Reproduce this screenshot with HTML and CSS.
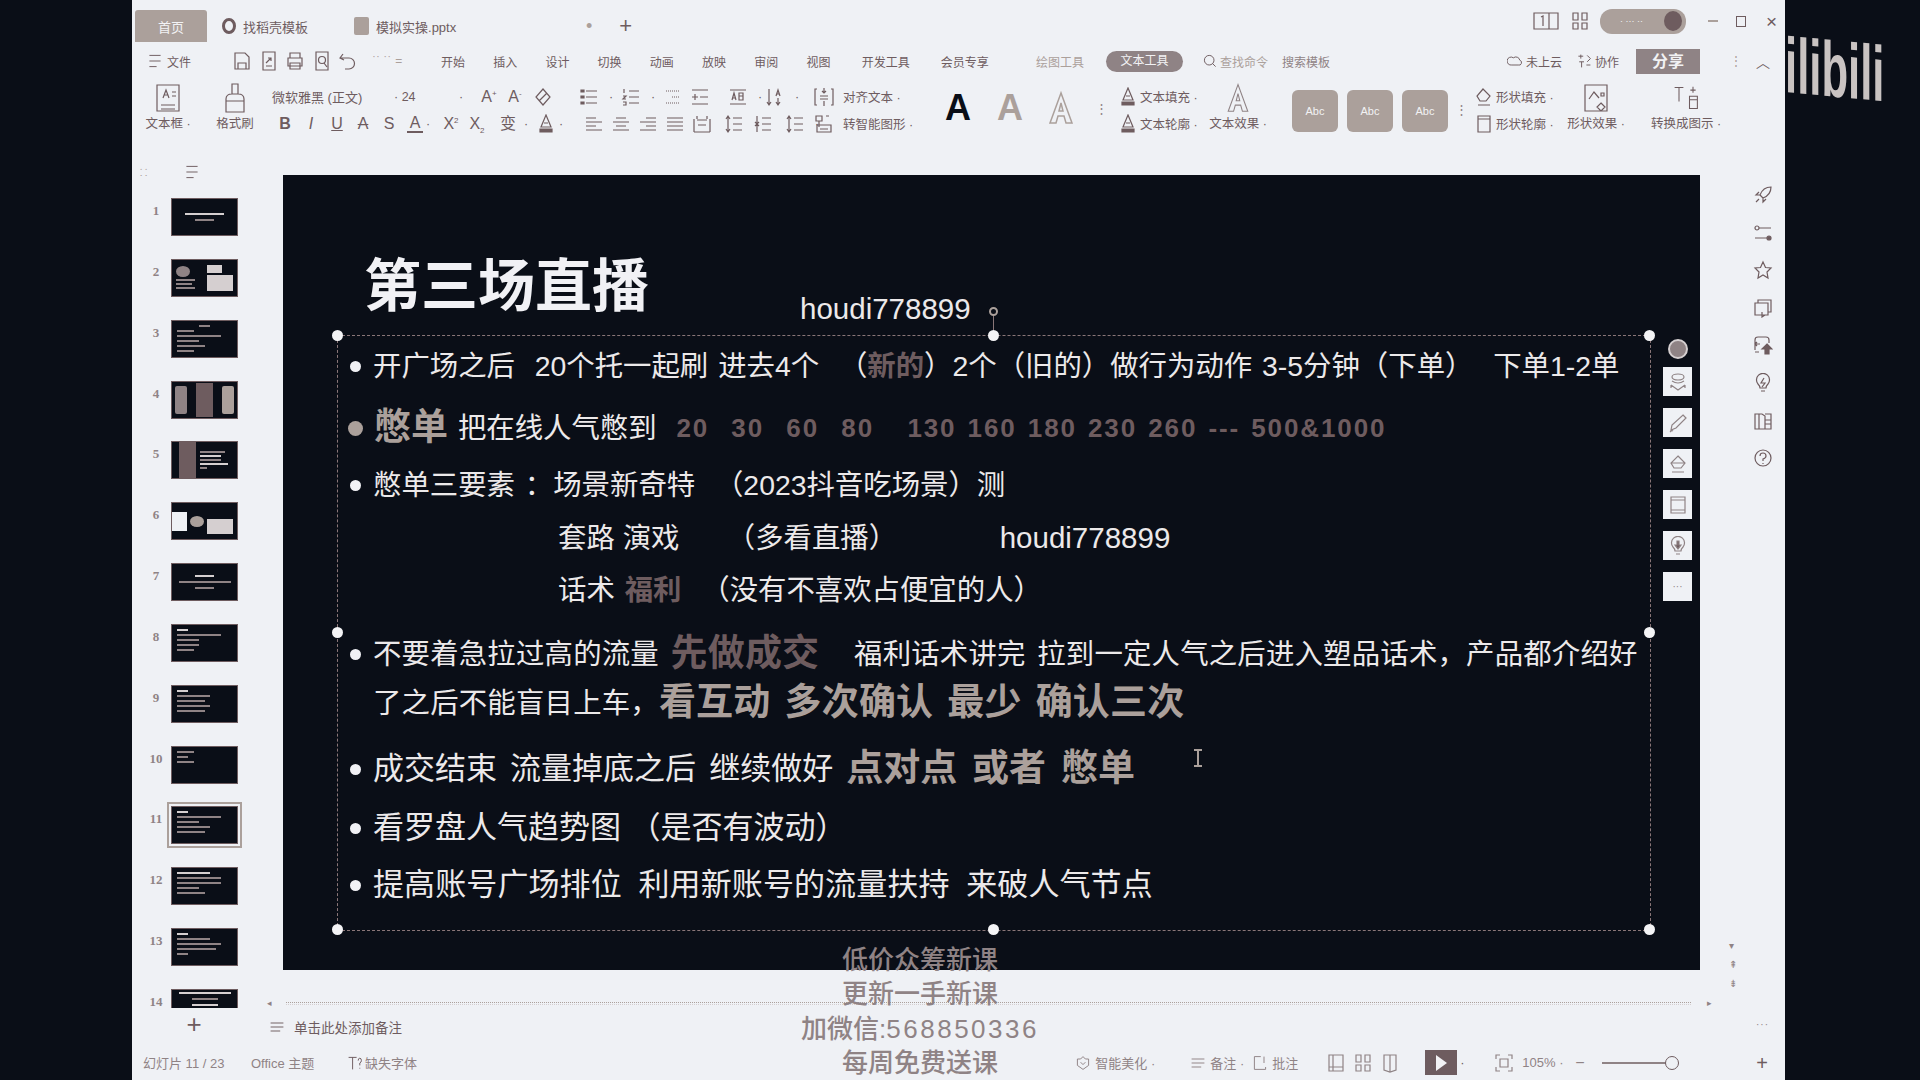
FILE: index.html
```html
<!DOCTYPE html>
<html lang="zh-CN">
<head>
    <meta charset="UTF-8">
    <title>模拟实操.pptx</title>
    <link rel="stylesheet" href="styles.css">
</head>
<body>

<svg class="defs" width="0" height="0">
    <symbol id="i-save" viewBox="0 0 20 20"><path d="M3 2h10l4 4v12H3zM6 18v-6h8v6"/></symbol>
    <symbol id="i-export" viewBox="0 0 20 20"><path d="M4 1h12v18H4zM7 12l5-5M9 7h3v3M7 15h6"/></symbol>
    <symbol id="i-print" viewBox="0 0 20 20"><path d="M5 7V2h10v5M3 7h14v8H3zM5 12h10v6H5z"/></symbol>
    <symbol id="i-preview" viewBox="0 0 20 20"><path d="M4 1h12v18H4z"/><circle cx="10" cy="9" r="3.5"/><path d="M12 12l3 4"/></symbol>
    <symbol id="i-undo" viewBox="0 0 20 20"><path d="M5 3L2 7l4 2M2 7h9a5 5 0 0 1 0 11H7"/></symbol>
    <symbol id="i-textbox" viewBox="0 0 28 32"><path d="M3 3h22v26H3zM7 23h14M7 27h14M9 16l3-8 3 8M10 13h4M18 10h4M18 14h4"/></symbol>
    <symbol id="i-brush" viewBox="0 0 28 32"><path d="M11 2h6v10h-6zM5 17q0-5 6-5h6q6 0 6 5v13H5zM5 19h18"/></symbol>
    <symbol id="i-eraser" viewBox="0 0 20 20"><path d="M10 2l7 8-7 8-7-8zM6 14l8-8"/></symbol>
    <symbol id="i-bullets" viewBox="0 0 20 20"><path d="M7 4h11M7 10h11M7 16h11"/><path class="solid" d="M2 3h3v2H2zM2 9h3v2H2zM2 15h3v2H2z"/></symbol>
    <symbol id="i-numbers" viewBox="0 0 20 20"><path d="M8 4h10M8 10h10M8 16h10M3 2v4M2 9h3l-3 3h3M2 15h3v3H2"/></symbol>
    <symbol id="i-outdent" viewBox="0 0 20 20"><path d="M3 4h14M9 10h8M3 16h14" stroke-dasharray="1 1"/></symbol>
    <symbol id="i-indent" viewBox="0 0 20 20"><path d="M2 3h16M10 10h8M2 17h16M2 10h6M5 7v6"/></symbol>
    <symbol id="i-ab" viewBox="0 0 20 20"><path d="M2 3h16M2 17h16M4 13l2-7 2 7M5 11h2M11 6h4v3h-4zM11 9h4v4h-4z"/></symbol>
    <symbol id="i-sort" viewBox="0 0 20 20"><path d="M4 2v16M2 15l2 3 2-3M11 9l2-6 2 6M12 7h2M13 11v7M11 15l2 3 2-3"/></symbol>
    <symbol id="i-valign" viewBox="0 0 20 20"><path d="M3 2H1v16h2M17 2h2v16h-2M10 1v5M8 4l2 2 2-2M6 9h8M6 12h8M10 14v5"/></symbol>
    <symbol id="i-smart" viewBox="0 0 20 20"><path d="M2 2h6v5H2zM12 2h3M5 7v6M3 11h14v7H3zM6 15h8"/></symbol>
    <symbol id="i-left" viewBox="0 0 20 20"><path d="M2 4h10M2 8h16M2 12h10M2 16h16"/></symbol>
    <symbol id="i-center" viewBox="0 0 20 20"><path d="M5 4h10M2 8h16M5 12h10M2 16h16"/></symbol>
    <symbol id="i-right" viewBox="0 0 20 20"><path d="M8 4h10M2 8h16M8 12h10M2 16h16"/></symbol>
    <symbol id="i-justify" viewBox="0 0 20 20"><path d="M2 4h16M2 8h16M2 12h16M2 16h16"/></symbol>
    <symbol id="i-dist" viewBox="0 0 20 20"><path d="M2 18h16M2 5v13M18 5v13M5 6h10M5 2v3M15 2v3M6 11h8"/></symbol>
    <symbol id="i-line1" viewBox="0 0 20 20"><path d="M4 2v16M2 5l2-3 2 3M2 15l2 3 2-3M9 4h9M9 10h9M9 16h9"/></symbol>
    <symbol id="i-line2" viewBox="0 0 20 20"><path d="M4 2v16M2 8l2 2 2-2M2 12l2-2 2 2M9 4h9M9 10h9M9 16h9"/></symbol>
    <symbol id="i-fill" viewBox="0 0 20 20"><path d="M10 1l5 12H5zM8 9h4"/><path class="solid" d="M4 15h12v3H4z"/></symbol>
    <symbol id="i-bigA" viewBox="0 0 30 36"><path d="M15 3L4 33h6l2-7h6l2 7h6zM13 21l2-8 2 8z"/></symbol>
    <symbol id="i-shapefill" viewBox="0 0 20 20"><path d="M9 2l7 7-4 5H6L3 9zM4 18h12"/></symbol>
    <symbol id="i-shapeline" viewBox="0 0 20 20"><path d="M4 2h12v16H4zM4 5h12"/></symbol>
    <symbol id="i-shapefx" viewBox="0 0 28 32"><path d="M3 3h22v26H3zM7 17l5-7 5 6M19 11h3v3h-3zM19 21l4 4-4 4-4-4z"/></symbol>
    <symbol id="i-convert" viewBox="0 0 32 32"><path d="M3 4h10M8 4v16M20 14h9v14h-9zM20 18h9M24 3v7M21 7h6"/></symbol>
    <symbol id="i-cloud" viewBox="0 0 20 20"><path d="M14 15H6a5 5 0 1 1 2-9 5 5 0 0 1 8 3 3 3 0 0 1-2 6z"/></symbol>
    <symbol id="i-share" viewBox="0 0 20 20"><path d="M6 2v5M3 4h6M4 11h6M7 11v7M14 3l4 4M18 7l-4 4M13 15h5"/></symbol>
    <symbol id="i-search" viewBox="0 0 20 20"><circle cx="9" cy="9" r="6"/><path d="M13 13l4 4"/></symbol>
    <symbol id="i-layout" viewBox="0 0 28 20"><path d="M2 2h24v16H2zM17 2v16M9 6l2-1v10"/></symbol>
    <symbol id="i-grid" viewBox="0 0 20 20"><path d="M3 2h5v7H3zM12 2h5v7h-5zM3 12h5v6H3zM12 12h5v6h-5z"/></symbol>
    <symbol id="i-rocket" viewBox="0 0 20 20"><path d="M18 2q-8 0-11 8l3 3q8-3 8-11zM7 10H3l3-3M10 13v4l3-3M3 17l3-3"/></symbol>
    <symbol id="i-sliders" viewBox="0 0 20 20"><path d="M6 5h12M2 15h12" /><circle cx="4" cy="5" r="2"/><circle class="solid" cx="16" cy="15" r="2"/></symbol>
    <symbol id="i-star" viewBox="0 0 20 20"><path d="M10 2l2.500 5.500 5.500.5-4 4 1 6-5-3-5 3 1-6-4-4 5.500-.5z"/></symbol>
    <symbol id="i-slides" viewBox="0 0 20 20"><path d="M5 5V2h13v12h-3M2 5h13v12H2zM9 14v5l3-2"/></symbol>
    <symbol id="i-cloudup" viewBox="0 0 20 20"><path d="M2 15V5q0-3 3-3h8q3 0 3 3v3M6 17H2M2 9h5M4 7L2 9l2 2"/><path class="solid" d="M14 9l5 5h-3v5h-4v-5H9z"/></symbol>
    <symbol id="i-bulb" viewBox="0 0 20 20"><path d="M7 15q0-2-2-4a6.500 6.500 0 1 1 10 0q-2 2-2 4zM8 18h4M11 5l-3 5h4l-3 4"/></symbol>
    <symbol id="i-book" viewBox="0 0 20 20"><path d="M2 3h7l3 2v13H2zM12 3h6v6M12 18h6v-5M12 9h6v4h-6zM6 3v15"/></symbol>
    <symbol id="i-help" viewBox="0 0 20 20"><circle cx="10" cy="10" r="8"/><path d="M7 8q0-3 3-3t3 3q0 2-3 3v2M10 15v1"/></symbol>
    <symbol id="i-layers" viewBox="0 0 20 20"><ellipse cx="10" cy="5" rx="6" ry="3"/><path d="M4 9q6 4 12 0M3 13l7 5 7-5M3 13v3M17 13v3"/></symbol>
    <symbol id="i-pen" viewBox="0 0 20 20"><path d="M15 2l3 3L8 15l-5 2 1-5zM2 19q2-2 3-1"/></symbol>
    <symbol id="i-fillshape" viewBox="0 0 20 20"><path d="M10 2l7 7-4 5H6L3 9zM3 9h14M4 18h12"/></symbol>
    <symbol id="i-frame" viewBox="0 0 20 20"><path d="M3 2h14v16H3zM3 5h14M3 15h14"/></symbol>
    <symbol id="i-bulbfill" viewBox="0 0 20 20"><path d="M7 15q0-2-2-4a6.500 6.500 0 1 1 10 0q-2 2-2 4zM8 18h4"/><path class="solid" d="M9 5h2v4h2l-3 4-3-4h2z"/></symbol>
    <symbol id="i-notes" viewBox="0 0 20 20"><path d="M2 5h16M2 10h16M2 15h12"/></symbol>
    <symbol id="i-font" viewBox="0 0 20 20"><path d="M2 3h10M7 3v15M14 7q0-3 2-3t2 3q0 2-2 3v3M16 16v1"/></symbol>
    <symbol id="i-shield" viewBox="0 0 20 20"><path d="M10 2l3 3h4v8l-7 5-7-5V5h4zM7 9l3 3 3-3"/></symbol>
    <symbol id="i-comment" viewBox="0 0 20 20"><path d="M3 2h8M3 2v16h14v-3M15 2v8"/></symbol>
    <symbol id="i-sorter" viewBox="0 0 20 20"><path d="M3 2h14v16H3zM7 2v16M3 14h14"/></symbol>
    <symbol id="i-reading" viewBox="0 0 20 20"><path d="M4 2h12v15l-6 2-6-2zM10 2v17"/></symbol>
    <symbol id="i-fit" viewBox="0 0 20 20"><path d="M2 6V2h4M14 2h4v4M18 14v4h-4M6 18H2v-4M6 6h8v8H6z"/></symbol>
    <symbol id="i-list" viewBox="0 0 20 20"><path d="M3 3h14M3 10h14M3 17h9"/></symbol>
</svg>

<div class="gutter"></div>

<div class="window">
    <header class="tabbar">
        <div class="tab tab-home">首页</div>
        <div class="tab tab-tpl"><span class="tpl-dot"></span>找稻壳模板</div>
        <div class="tab tab-file"><span class="file-dot"></span>模拟实操.pptx</div>
        <span class="tab-mark">•</span>
        <span class="tab-add">+</span>
        <div class="win-actions">
            <svg class="ic ic-wide"><use href="#i-layout"/></svg>
            <svg class="ic"><use href="#i-grid"/></svg>
            <div class="user-pill"><span class="user-name">· ··· ··</span><span class="avatar"></span></div>
            <span class="win-btn win-min"></span>
            <span class="win-btn win-max"></span>
            <span class="win-btn win-close">×</span>
        </div>
    </header>

    <nav class="menubar">
        <span class="menu-file"><svg class="ic ic-s"><use href="#i-list"/></svg>文件</span>
        <div class="quick">
            <svg class="ic"><use href="#i-save"/></svg>
            <svg class="ic"><use href="#i-export"/></svg>
            <svg class="ic"><use href="#i-print"/></svg>
            <svg class="ic"><use href="#i-preview"/></svg>
            <svg class="ic"><use href="#i-undo"/></svg>
            <span class="quick-more">˙˙ ˙˙ =</span>
        </div>
        <div class="menu-items">
            <span>开始</span><span>插入</span><span>设计</span><span>切换</span><span>动画</span><span>放映</span><span>审阅</span><span>视图</span><span>开发工具</span><span>会员专享</span>
        </div>
        <span class="menu-draw">绘图工具</span>
        <span class="menu-active">文本工具</span>
        <span class="menu-find"><svg class="ic ic-s"><use href="#i-search"/></svg>查找命令</span>
        <span class="menu-tpl">搜索模板</span>
        <div class="menu-right">
            <span class="menu-act"><svg class="ic ic-s"><use href="#i-cloud"/></svg>未上云</span>
            <span class="menu-act"><svg class="ic ic-s"><use href="#i-share"/></svg>协作</span>
            <span class="share-box">分享</span>
            <span class="menu-dots">⋮</span>
            <span class="menu-up">︿</span>
        </div>
    </nav>

    <section class="ribbon">
        <div class="big-tool tool-textbox"><svg class="ic-big"><use href="#i-textbox"/></svg><span>文本框 ·</span></div>
        <div class="big-tool tool-brush"><svg class="ic-big"><use href="#i-brush"/></svg><span>格式刷</span></div>

        <div class="rib-group font-group">
            <div class="rib-row">
                <span class="font-name">微软雅黑 (正文)</span>
                <span class="font-size">· 24</span>
                <span class="font-caret">·</span>
                <span class="glyph">A<sup>+</sup></span>
                <span class="glyph">A<sup>-</sup></span>
                <svg class="ic sp-5"><use href="#i-eraser"/></svg>
            </div>
            <div class="rib-row">
                <b class="glyph">B</b>
                <i class="glyph">I</i>
                <u class="glyph">U</u>
                <s class="glyph">A</s>
                <span class="glyph">S</span>
                <span class="glyph glyph-under">A</span>
                <span class="caret">·</span>
                <span class="glyph sp-5">X<sup>2</sup></span>
                <span class="glyph">X<sub>2</sub></span>
                <span class="glyph sp-5">变</span>
                <span class="caret">·</span>
                <svg class="ic sp-5"><use href="#i-fill"/></svg>
                <span class="caret">·</span>
            </div>
        </div>

        <div class="rib-group para-group">
            <div class="rib-row">
                <svg class="ic"><use href="#i-bullets"/></svg><span class="caret">·</span>
                <svg class="ic sp-5"><use href="#i-numbers"/></svg><span class="caret">·</span>
                <svg class="ic sp-5"><use href="#i-outdent"/></svg>
                <svg class="ic"><use href="#i-indent"/></svg>
                <svg class="ic sp-11"><use href="#i-ab"/></svg><span class="caret">·</span>
                <svg class="ic"><use href="#i-sort"/></svg><span class="caret">·</span>
                <span class="rib-label para-label"><svg class="ic"><use href="#i-valign"/></svg>对齐文本 ·</span>
            </div>
            <div class="rib-row align-row">
                <svg class="ic"><use href="#i-left"/></svg>
                <svg class="ic"><use href="#i-center"/></svg>
                <svg class="ic"><use href="#i-right"/></svg>
                <svg class="ic"><use href="#i-justify"/></svg>
                <svg class="ic"><use href="#i-dist"/></svg>
                <svg class="ic sp-5"><use href="#i-line1"/></svg>
                <svg class="ic sp-2"><use href="#i-line2"/></svg>
                <svg class="ic sp-5"><use href="#i-line1"/></svg><span class="caret">·</span>
                <span class="rib-label smart-label"><svg class="ic"><use href="#i-smart"/></svg>转智能图形 ·</span>
            </div>
        </div>

        <div class="styles-a">
            <span class="style-a a-black">A</span>
            <span class="style-a a-gray">A</span>
            <svg class="a-outline"><use href="#i-bigA"/></svg>
            <span class="more-mark">⋮</span>
        </div>

        <div class="rib-group fill-group">
            <span class="rib-label"><svg class="ic"><use href="#i-fill"/></svg>文本填充 ·</span>
            <span class="rib-label"><svg class="ic"><use href="#i-fill"/></svg>文本轮廓 ·</span>
        </div>
        <div class="big-tool tool-effect"><svg class="ic-big"><use href="#i-bigA"/></svg><span>文本效果 ·</span></div>

        <div class="abc-list">
            <span class="abc">Abc</span><span class="abc">Abc</span><span class="abc">Abc</span>
            <span class="more-mark">⋮</span>
        </div>

        <div class="rib-group shape-group">
            <span class="rib-label"><svg class="ic"><use href="#i-shapefill"/></svg>形状填充 ·</span>
            <span class="rib-label"><svg class="ic"><use href="#i-shapeline"/></svg>形状轮廓 ·</span>
        </div>
        <div class="big-tool tool-shapefx"><svg class="ic-big"><use href="#i-shapefx"/></svg><span>形状效果 ·</span></div>
        <div class="big-tool tool-convert"><svg class="ic-big"><use href="#i-convert"/></svg><span>转换成图示 ·</span></div>
    </section>

    <main class="workspace">
        <aside class="sidebar">
            <div class="side-head">
                <span class="side-dots">⁚ ⁚</span>
                <svg class="ic ic-s"><use href="#i-list"/></svg>
            </div>
            <div class="thumb-list">
                <div class="thumb-item"><span class="num">1</span><div class="thumb t-center"><i class="bar w60 light"></i><i class="bar w30 mid"></i></div></div>
                <div class="thumb-item"><span class="num">2</span><div class="thumb t-two"><div class="t-col"><i class="blob"></i><i class="bar w70 mid"></i><i class="bar w60 mid"></i><i class="bar w70 mid"></i></div><div class="t-col"><i class="block short"></i><i class="block tall"></i></div></div></div>
                <div class="thumb-item"><span class="num">3</span><div class="thumb t-lines"><i class="bar w20 mid mid-x"></i><i class="bar w30 mid"></i><i class="bar w80 mid"></i><i class="bar w40 mid"></i><i class="bar w50 mid"></i><i class="bar w30 mid"></i></div></div>
                <div class="thumb-item"><span class="num">4</span><div class="thumb t-three"><i class="phone"></i><i class="panel"></i><i class="phone light-phone"></i></div></div>
                <div class="thumb-item"><span class="num">5</span><div class="thumb t-two t-flush"><i class="panel wide-panel"></i><div class="t-col"><i class="bar w70 mid"></i><i class="bar w60 light"></i><i class="bar w60 mid"></i><i class="bar w80 light"></i><i class="bar w20 mid"></i></div></div></div>
                <div class="thumb-item"><span class="num">6</span><div class="thumb t-six"><i class="notch"></i><i class="blob blob-light"></i><i class="block speckle"></i></div></div>
                <div class="thumb-item"><span class="num">7</span><div class="thumb t-center"><i class="bar w30 light"></i><i class="bar w80 mid"></i><i class="bar w30 mid"></i></div></div>
                <div class="thumb-item"><span class="num">8</span><div class="thumb t-lines"><i class="bar w20 light"></i><i class="bar w80 mid"></i><i class="bar w40 mid"></i><i class="bar w40 mid"></i><i class="bar w30 mid"></i></div></div>
                <div class="thumb-item"><span class="num">9</span><div class="thumb t-lines"><i class="bar w20 light"></i><i class="bar w60 mid"></i><i class="bar w50 mid"></i><i class="bar w60 mid"></i><i class="bar w50 mid"></i></div></div>
                <div class="thumb-item"><span class="num">10</span><div class="thumb t-lines"><i class="bar w30 mid"></i><i class="bar w20 mid"></i><i class="bar w30 mid"></i></div></div>
                <div class="thumb-item"><span class="num">11</span><div class="thumb t-lines thumb-on"><i class="bar w20 light"></i><i class="bar w80 mid"></i><i class="bar w40 mid"></i><i class="bar w60 mid"></i><i class="bar w50 mid"></i></div></div>
                <div class="thumb-item"><span class="num">12</span><div class="thumb t-lines"><i class="bar w60 light"></i><i class="bar w80 mid"></i><i class="bar w80 mid"></i><i class="bar w40 mid"></i><i class="bar w50 mid"></i></div></div>
                <div class="thumb-item"><span class="num">13</span><div class="thumb t-lines"><i class="bar w20 light"></i><i class="bar w60 mid"></i><i class="bar w80 mid"></i><i class="bar w70 mid"></i><i class="bar w20 mid"></i></div></div>
                <div class="thumb-item"><span class="num">14</span><div class="thumb thumb-cut t-center"><i class="bar w80 light"></i><i class="bar w40 mid"></i><i class="bar w40 light"></i></div></div>
            </div>
            <div class="side-add">+</div>
        </aside>

        <div class="stage">
            <div class="slide">
                <div class="slide-head">
                    <h1 class="slide-title">第三场直播</h1>
                    <span class="slide-id">houdi778899</span>
                </div>

                <div class="textbox">
                    <span class="handle h-tl"></span><span class="handle h-tm"></span><span class="handle h-tr"></span>
                    <span class="handle h-ml"></span><span class="handle h-mr"></span>
                    <span class="handle h-bl"></span><span class="handle h-bm"></span><span class="handle h-br"></span>
                    <span class="rotate"></span>

                    <p class="line m10 ws"><i class="dot"></i>开广场之后  20个托一起刷 进去4个  （<b class="mute">新的</b>）2个（旧的）做行为动作 3-5分钟（下单）  下单1-2单</p>
                    <p class="line m22 ws"><i class="dot dot-big"></i><b class="big tan">憋单</b> 把在线人气憋到  <span class="nums">20  30  60  80   130 160 180 230 260 --- 500&amp;1000</span></p>
                    <p class="line m17 ws"><i class="dot"></i>憋单三要素 ：场景新奇特  （2023抖音吃场景）测</p>
                    <p class="line m13 sub">套路 演戏      （多看直播）             <span class="sub-id">houdi778899</span></p>
                    <p class="line m12 sub ws">话术 <b class="mute">福利</b>  （没有不喜欢占便宜的人）</p>
                    <p class="line m24 ws-b"><i class="dot"></i>不要着急拉过高的流量 <b class="big mute">先做成交</b>   福利话术讲完 拉到一定人气之后进入塑品话术，产品都介绍好</p>
                    <p class="line m9 cont ws-b">了之后不能盲目上车，<b class="big tan">看互动 多次确认 最少 确认三次</b></p>
                    <p class="line m26 ws-l large"><i class="dot"></i>成交结束 流量掉底之后 继续做好 <b class="big tan">点对点 或者 憋单</b></p>
                    <p class="line m19 large"><i class="dot"></i>看罗盘人气趋势图 （是否有波动）</p>
                    <p class="line m17 ws-x large"><i class="dot"></i>提高账号广场排位 利用新账号的流量扶持 来破人气节点</p>
                </div>

                <span class="ibeam"></span>

                <div class="float-tools">
                    <span class="tool-minus"></span>
                    <span class="tool-sq"><svg class="ic"><use href="#i-layers"/></svg></span>
                    <span class="tool-sq"><svg class="ic"><use href="#i-pen"/></svg></span>
                    <span class="tool-sq"><svg class="ic"><use href="#i-fillshape"/></svg></span>
                    <span class="tool-sq"><svg class="ic"><use href="#i-frame"/></svg></span>
                    <span class="tool-sq"><svg class="ic"><use href="#i-bulbfill"/></svg></span>
                    <span class="tool-sq tool-more">···</span>
                </div>
            </div>

            <div class="hscroll"><span class="arr">◂</span><span class="track"></span><span class="arr">▸</span></div>
            <div class="notes"><svg class="ic ic-s"><use href="#i-notes"/></svg>单击此处添加备注</div>
        </div>

        <aside class="rail">
            <div class="rail-icons">
                <svg class="ic"><use href="#i-rocket"/></svg>
                <svg class="ic"><use href="#i-sliders"/></svg>
                <svg class="ic"><use href="#i-star"/></svg>
                <svg class="ic"><use href="#i-slides"/></svg>
                <svg class="ic"><use href="#i-cloudup"/></svg>
                <svg class="ic"><use href="#i-bulb"/></svg>
                <svg class="ic"><use href="#i-book"/></svg>
                <svg class="ic"><use href="#i-help"/></svg>
            </div>
            <div class="rail-page">
                <span>▾</span><span>⇞</span><span>⇟</span>
            </div>
            <div class="rail-more">···</div>
        </aside>
    </main>

    <footer class="statusbar">
        <span class="st-page">幻灯片 11 / 23</span>
        <span class="st-theme">Office 主题</span>
        <span class="st-font"><svg class="ic ic-s"><use href="#i-font"/></svg>缺失字体</span>
        <div class="st-right">
            <span class="st-beauty"><svg class="ic ic-s"><use href="#i-shield"/></svg>智能美化 ·</span>
            <span class="st-note"><svg class="ic ic-s"><use href="#i-notes"/></svg>备注 ·</span>
            <span class="st-comment"><svg class="ic ic-s"><use href="#i-comment"/></svg>批注</span>
            <svg class="ic st-view"><use href="#i-sorter"/></svg>
            <svg class="ic st-view"><use href="#i-grid"/></svg>
            <svg class="ic st-view"><use href="#i-reading"/></svg>
            <span class="play-box"><i class="play-tri"></i></span>
            <span class="caret">·</span>
            <svg class="ic st-fit"><use href="#i-fit"/></svg>
            <span class="st-zoom">105% ·</span>
            <span class="st-minus">−</span>
            <span class="slider"><i class="slider-knob"></i></span>
            <span class="st-plus">+</span>
        </div>
    </footer>

    <div class="captions">
        <span>低价众筹新课</span>
        <span>更新一手新课</span>
        <span>加微信:<span class="cap-num">568850336</span></span>
        <span>每周免费送课</span>
    </div>
</div>

<div class="brand"><span class="brand-text">ilibili</span></div>

</body>
</html>
```

FILE: styles.css
```css
* {
    box-sizing: border-box;
}

body {
    margin: 0;
    width: 1920px;
    height: 1080px;
    overflow: hidden;
    display: flex;
    background-color: #0a0e17;
    color: #6e5c5f;
    font-family: "Liberation Sans", "Noto Sans CJK SC", sans-serif;
    font-size: 12px;
}

.defs {
    position: absolute;
}

.gutter {
    width: 132px;
}

.window {
    position: relative;
    width: 1653px;
    height: 1080px;
    display: flex;
    flex-direction: column;
    background-color: #eff1f5;
}

/* icons */
.ic {
    width: 20px;
    height: 20px;
    flex: none;
    fill: none;
    stroke: #6e5c5f;
    stroke-width: 1.2;
}

.ic-s {
    width: 16px;
    height: 16px;
}

.ic-wide {
    width: 28px;
}

.solid {
    fill: #6e5c5f;
}

.ic-big {
    width: 28px;
    height: 32px;
    fill: none;
    stroke: #6e5c5f;
    stroke-width: 1.2;
}

.sp-2 {
    margin-left: 2px;
}

.sp-5 {
    margin-left: 5px;
}

.sp-11 {
    margin-left: 11px;
}

/* tab bar */
.tabbar {
    height: 42px;
    display: flex;
    align-items: center;
    padding-left: 3px;
    flex: none;
    font-size: 13px;
}

.tab {
    display: flex;
    align-items: center;
    margin-top: 10px;
}

.tab-home {
    width: 72px;
    height: 32px;
    justify-content: center;
    background-color: #aba09b;
    color: #f2f2f4;
    border-radius: 3px 3px 0 0;
}

.tab-tpl {
    margin-left: 15px;
    gap: 7px;
}

.tpl-dot {
    width: 14px;
    height: 16px;
    border-radius: 50%;
    border: 3px solid #6e5c5f;
}

.tab-file {
    margin-left: 46px;
    gap: 7px;
    width: 232px;
}

.file-dot {
    width: 15px;
    height: 18px;
    background-color: #aba09b;
    border-radius: 2px;
}

.tab-mark {
    color: #aba09b;
    font-size: 18px;
    margin-top: 10px;
}

.tab-add {
    margin-left: 27px;
    margin-top: 10px;
    font-size: 22px;
    line-height: 1;
}

.win-actions {
    margin-left: auto;
    display: flex;
    align-items: center;
    padding-right: 9px;
}

.win-actions .ic-wide {
    margin-right: 10px;
}

.user-pill {
    width: 86px;
    height: 25px;
    margin-left: 10px;
    padding: 0 4px 0 20px;
    display: flex;
    align-items: center;
    justify-content: space-between;
    background-color: #aba09b;
    color: #f2f2f4;
    border-radius: 12px;
    font-size: 9px;
}

.avatar {
    width: 18px;
    height: 20px;
    border-radius: 50%;
    background-color: #6e5c5f;
}

.win-btn {
    display: block;
    width: 10px;
    margin-left: 18px;
}

.win-min {
    height: 2px;
    margin-left: 22px;
    background-color: #aba09b;
}

.win-max {
    height: 11px;
    border: 1px solid #6e5c5f;
}

.win-close {
    margin-left: 20px;
    font-size: 19px;
    line-height: 1;
}

/* menu bar */
.menubar {
    height: 38px;
    flex: none;
    display: flex;
    align-items: center;
    font-size: 12px;
}

.menu-file {
    display: flex;
    align-items: center;
    gap: 4px;
    margin-left: 15px;
    width: 85px;
}

.quick {
    display: flex;
    align-items: center;
    gap: 6.500px;
    width: 209px;
}

.quick-more {
    color: #aba09b;
    margin-left: 8px;
    white-space: nowrap;
}

.menu-items {
    display: flex;
    gap: 28.200px;
    width: 552px;
}

.menu-items span:nth-child(9),
.menu-items span:nth-child(10) {
    margin-left: 3px;
}

.menu-draw {
    margin-left: 43px;
    color: #aba09b;
}

.menu-active {
    width: 77px;
    height: 21px;
    margin-left: 22px;
    line-height: 21px;
    text-align: center;
    background-color: #8f8385;
    color: #f2f2f4;
    border-radius: 11px;
}

.menu-find {
    display: flex;
    align-items: center;
    gap: 2px;
    margin-left: 19px;
    color: #aba09b;
    width: 80px;
}

.menu-tpl {
    color: #8f8385;
}

.menu-right {
    margin-left: auto;
    display: flex;
    align-items: center;
    gap: 14px;
    padding-right: 15px;
}

.menu-act {
    display: flex;
    align-items: center;
    gap: 3px;
}

.share-box {
    width: 64px;
    height: 25px;
    margin-left: 3px;
    line-height: 25px;
    text-align: center;
    background-color: #8f8385;
    color: #f2f2f4;
    font-weight: bold;
    font-size: 16px;
}

.menu-dots {
    margin-left: 16px;
    color: #aba09b;
}

.menu-up {
    font-size: 14px;
}

/* ribbon */
.ribbon {
    height: 60px;
    flex: none;
    display: flex;
    font-size: 12.500px;
}

.big-tool {
    display: flex;
    flex-direction: column;
    align-items: center;
    white-space: nowrap;
    padding-top: 2px;
}

.big-tool span {
    margin-top: 1px;
    line-height: 18px;
}

.tool-textbox {
    width: 60px;
    margin-left: 6px;
}

.tool-brush {
    width: 50px;
    margin-left: 12px;
}

.rib-group {
    display: flex;
    flex-direction: column;
    padding-top: 3px;
}

.rib-row {
    height: 27px;
    display: flex;
    align-items: center;
}

.rib-label {
    display: flex;
    align-items: center;
    gap: 2px;
    height: 27px;
    white-space: nowrap;
}

.font-group {
    width: 310px;
    margin-left: 12px;
}

.font-name {
    width: 122px;
    font-size: 13px;
}

.font-size {
    width: 65px;
}

.font-caret {
    width: 17px;
}

.glyph {
    font-size: 16px;
    line-height: 1;
    width: 26px;
    text-align: center;
}

.glyph sup,
.glyph sub {
    font-size: 8px;
    line-height: 0;
}

.glyph-under {
    border-bottom: 2px solid #6e5c5f;
    width: 16px;
    margin-left: 5px;
}

.caret {
    width: 10px;
    color: #6e5c5f;
    text-align: center;
}

.para-group {
    width: 350px;
    margin-left: -3px;
}

.para-group .ic {
    margin-right: 7px;
}

.align-row {
    padding-left: 5px;
}

.para-label {
    margin-left: 12px;
}

.smart-label {
    margin-left: -8px;
}

.styles-a {
    width: 196px;
    display: flex;
    align-items: center;
    padding-bottom: 4px;
    margin-left: 3px;
}

.style-a {
    width: 52px;
    text-align: center;
    font-size: 36px;
    font-weight: bold;
}

.a-black {
    color: #0a0e17;
}

.a-gray {
    color: #aba09b;
}

.a-outline {
    width: 30px;
    height: 36px;
    margin-left: 10px;
    fill: none;
    stroke: #aba09b;
    stroke-width: 1.5;
}

.more-mark {
    margin-left: 19px;
    color: #8f8385;
}

.fill-group {
    width: 90px;
    margin-left: -10px;
}

.tool-effect {
    width: 60px;
}

.tool-effect .ic-big {
    stroke: #8f8385;
}

.abc-list {
    display: flex;
    align-items: flex-start;
    gap: 9px;
    width: 182px;
    margin-left: 24px;
    padding-top: 10px;
}

.abc {
    width: 46px;
    height: 42px;
    line-height: 42px;
    text-align: center;
    background-color: #aba09b;
    color: #f2f2f4;
    font-size: 11px;
    border-radius: 6px;
}

.abc-list .more-mark {
    margin-left: -2px;
    margin-top: 12px;
}

.shape-group {
    width: 90px;
}

.tool-shapefx {
    width: 60px;
    margin-left: 2px;
}

.tool-convert {
    width: 76px;
    margin-left: 22px;
}

/* workspace */
.workspace {
    flex: 1;
    min-height: 0;
    display: flex;
}

.sidebar {
    width: 151px;
    display: flex;
    flex-direction: column;
}

.side-head {
    height: 58px;
    display: flex;
    align-items: center;
    padding: 6px 0 0 8px;
    color: #aba09b;
}

.side-head .ic {
    margin-left: 37px;
}

.side-dots {
    font-size: 10px;
}

.thumb-list {
    height: 810px;
    overflow: hidden;
    display: flex;
    flex-direction: column;
    gap: 22.850px;
}

.thumb-item {
    display: flex;
    align-items: flex-start;
    flex: none;
    padding-left: 9px;
}

.num {
    width: 30px;
    text-align: center;
    font-family: "Liberation Serif", serif;
    font-weight: bold;
    font-size: 13px;
    line-height: 26px;
    color: #8f8385;
}

.thumb {
    width: 67px;
    height: 38px;
    background-color: #0a0e17;
    border: 1px solid #6e5c5f;
    overflow: hidden;
}

.thumb-on {
    outline: 2px solid #aba09b;
    outline-offset: 2px;
}

.thumb-cut {
    height: 20px;
    gap: 2px;
}

/* thumbnail innards */
.bar {
    display: block;
    height: 2px;
    flex: none;
}

.light {
    background-color: #d5cfd0;
}

.mid {
    background-color: #8f8385;
}

.w20 { width: 20%; }
.w30 { width: 30%; }
.w40 { width: 40%; }
.w50 { width: 50%; }
.w60 { width: 60%; }
.w70 { width: 70%; }
.w80 { width: 80%; }

.t-center {
    display: flex;
    flex-direction: column;
    align-items: center;
    justify-content: center;
    gap: 4px;
}

.t-lines {
    display: flex;
    flex-direction: column;
    gap: 3px;
    padding: 4px 5px;
}

.mid-x {
    align-self: center;
}

.t-two {
    display: flex;
    gap: 4px;
    padding: 2px 4px;
}

.t-flush {
    padding: 0 2px 0 7px;
}

.t-col {
    flex: 1;
    display: flex;
    flex-direction: column;
    justify-content: center;
    gap: 2px;
}

.blob {
    display: block;
    width: 14px;
    height: 11px;
    border-radius: 50%;
    background-color: #8f8385;
}

.block {
    display: block;
    background-color: #d5cfd0;
}

.block.short {
    width: 60%;
    height: 8px;
}

.block.tall {
    height: 16px;
}

.t-three {
    display: flex;
    justify-content: space-between;
    align-items: center;
    padding: 1px 3px;
}

.phone {
    display: block;
    width: 12px;
    height: 28px;
    background-color: #8f8385;
    border-radius: 2px;
}

.light-phone {
    background-color: #aba09b;
}

.panel {
    display: block;
    width: 17px;
    height: 100%;
    background-color: #6e5c5f;
}

.wide-panel {
    flex: none;
}

.t-six {
    display: flex;
    align-items: center;
    gap: 3px;
}

.notch {
    display: block;
    width: 15px;
    height: 19px;
    background-color: #eff1f5;
}

.blob-light {
    background-color: #aba09b;
    flex: none;
}

.speckle {
    width: 26px;
    height: 15px;
    margin-top: 10px;
}

.side-add {
    height: 37px;
    line-height: 32px;
    text-align: center;
    font-size: 26px;
    padding-right: 27px;
    font-weight: 300;
}

/* stage and slide */
.stage {
    width: 1417px;
    padding-top: 35px;
    display: flex;
    flex-direction: column;
}

.slide {
    position: relative;
    width: 1417px;
    height: 795px;
    flex: none;
    background-color: #0a0e17;
    color: #ece9ea;
    font-size: 28.400px;
}

.slide-head {
    height: 160px;
    display: flex;
    align-items: flex-start;
    padding: 78px 0 0 81px;
}

.slide-title {
    margin: 0;
    font-size: 57px;
    line-height: 66px;
    font-weight: bold;
    color: #f1f1f5;
}

.slide-id {
    margin-left: 151px;
    margin-top: 39px;
    font-size: 29.500px;
    line-height: 34px;
}

.textbox {
    position: relative;
    width: 1314px;
    height: 596px;
    margin-left: 54px;
    border: 1px dashed #8a7678;
}

.handle {
    position: absolute;
    width: 11px;
    height: 11px;
    margin: -6px 0 0 -6px;
    background-color: #f4f4f6;
    border-radius: 50%;
}

.h-tl { left: 0; top: 0; }
.h-tm { left: 50%; top: 0; }
.h-tr { left: 100%; top: 0; }
.h-ml { left: 0; top: 50%; }
.h-mr { left: 100%; top: 50%; }
.h-bl { left: 0; top: 100%; }
.h-bm { left: 50%; top: 100%; }
.h-br { left: 100%; top: 100%; }

.rotate {
    position: absolute;
    left: 50%;
    top: -29px;
    width: 9px;
    height: 9px;
    margin-left: -5px;
    border: 2px solid #aba09b;
    border-radius: 50%;
}

.rotate::after {
    content: "";
    position: absolute;
    left: 1.500px;
    top: 7px;
    width: 1px;
    height: 14px;
    background-color: #8a7678;
}

.line {
    margin: 0;
    height: 40px;
    line-height: 40px;
    display: flex;
    align-items: center;
    white-space: pre;
}

.ws {
    word-spacing: 2px;
}

.ws-b {
    word-spacing: 3.500px;
    letter-spacing: 0.200px;
}

.ws-l {
    word-spacing: 4.500px;
}

.ws-x {
    word-spacing: 8px;
    letter-spacing: 0.100px;
}

.large {
    font-size: 31px;
}

.m9 { margin-top: 9px; }
.m10 { margin-top: 10px; }
.m12 { margin-top: 12px; }
.m13 { margin-top: 13px; }
.m17 { margin-top: 17px; }
.m19 { margin-top: 19px; }
.m22 { margin-top: 22px; }
.m24 { margin-top: 24px; }
.m26 { margin-top: 26px; }

.dot {
    flex: none;
    width: 11px;
    height: 11px;
    margin: 0 12px;
    border-radius: 50%;
    background-color: #f1f1f5;
}

.dot-big {
    width: 15px;
    height: 15px;
    margin: 0 11px 0 10px;
    background-color: #aba09b;
}

.sub {
    padding-left: 220px;
}

.cont {
    padding-left: 35px;
}

.sub-id {
    font-size: 29.500px;
}

.mute {
    color: #6e5c5f;
}

.tan {
    color: #aba09b;
}

.big {
    font-size: 37px;
}

.nums {
    color: #6e5c5f;
    font-weight: bold;
    font-size: 26px;
    letter-spacing: 1.900px;
}

.ibeam {
    position: absolute;
    left: 914px;
    top: 574px;
    width: 2px;
    height: 18px;
    background-color: #aba09b;
}

.ibeam::before,
.ibeam::after {
    content: "";
    position: absolute;
    left: -3px;
    width: 8px;
    height: 2px;
    background-color: #aba09b;
}

.ibeam::before {
    top: 0;
}

.ibeam::after {
    bottom: 0;
}

.float-tools {
    position: absolute;
    left: 1380px;
    top: 164px;
    display: flex;
    flex-direction: column;
    align-items: center;
    gap: 12px;
}

.tool-minus {
    width: 20px;
    height: 20px;
    margin-bottom: -4px;
    border-radius: 50%;
    background-color: #8f8385;
    border: 2px solid #d5cfd0;
}

.tool-sq {
    width: 29px;
    height: 29px;
    display: flex;
    align-items: center;
    justify-content: center;
    background-color: #eff1f5;
}

.tool-sq .ic {
    stroke: #8f8385;
}

.tool-more {
    color: #8f8385;
    font-size: 10px;
}

.hscroll {
    height: 10px;
    margin: 28px 0 0 -16px;
    display: flex;
    align-items: center;
    color: #8f8385;
    font-size: 9px;
    width: 1450px;
}

.track {
    width: 1405px;
    height: 3px;
    margin: 0 16px 0 14px;
    border-top: 1px dotted #aba09b;
    border-bottom: 1px dotted #d5cfd0;
}

.notes {
    height: 37px;
    display: flex;
    align-items: center;
    gap: 9px;
    margin-left: -14px;
    font-size: 13.500px;
}

/* right rail */
.rail {
    flex: 1;
    display: flex;
    flex-direction: column;
    align-items: center;
    padding-left: 40px;
}

.rail-icons {
    display: flex;
    flex-direction: column;
    gap: 17.600px;
    padding-top: 45px;
}

.rail-page {
    display: flex;
    flex-direction: column;
    gap: 8px;
    margin: 472px 0 0 -60px;
    color: #8f8385;
    font-size: 10px;
}

.rail-more {
    margin-top: 30px;
    color: #8f8385;
    letter-spacing: 1px;
    font-size: 10px;
}

/* status bar */
.statusbar {
    height: 35px;
    flex: none;
    display: flex;
    align-items: center;
    font-size: 13px;
    color: #8f8385;
}

.st-page {
    margin-left: 11px;
    width: 108px;
}

.st-theme {
    width: 96px;
}

.st-font {
    display: flex;
    align-items: center;
    gap: 2px;
}

.st-right {
    margin-left: auto;
    display: flex;
    align-items: center;
    padding-right: 17px;
}

.st-right .ic {
    stroke: #8f8385;
}

.st-beauty,
.st-note,
.st-comment {
    display: flex;
    align-items: center;
    gap: 4px;
}

.st-beauty {
    width: 115px;
}

.st-note {
    width: 62px;
}

.st-comment {
    width: 74px;
}

.st-view {
    margin-right: 7px;
}

.play-box {
    width: 32px;
    height: 25px;
    margin-left: 18px;
    display: flex;
    align-items: center;
    justify-content: center;
    background-color: #6e5c5f;
}

.play-tri {
    width: 0;
    height: 0;
    border-left: 11px solid #f2f2f4;
    border-top: 8px solid transparent;
    border-bottom: 8px solid transparent;
}

.st-fit {
    margin-left: 27px;
}

.st-zoom {
    margin-left: 8px;
    width: 53px;
    white-space: nowrap;
}

.st-minus {
    width: 25px;
    font-size: 16px;
}

.slider {
    position: relative;
    width: 70px;
    height: 2px;
    margin-left: 2px;
    background-color: #8f8385;
}

.slider-knob {
    position: absolute;
    right: -7px;
    top: -6px;
    width: 14px;
    height: 14px;
    border-radius: 50%;
    border: 1px solid #6e5c5f;
    background-color: #eff1f5;
}

.st-plus {
    margin-left: 84px;
    font-size: 20px;
    line-height: 1;
    color: #6e5c5f;
}

/* burned-in captions */
.captions {
    position: absolute;
    left: 588px;
    top: 943px;
    width: 400px;
    display: flex;
    flex-direction: column;
    align-items: center;
    font-size: 26px;
    line-height: 34.400px;
    font-weight: 500;
    color: #8f8385;
}

.cap-num {
    letter-spacing: 2.500px;
}

.brand {
    flex: 1;
}

.brand-text {
    display: block;
    width: 135px;
    margin-top: 20px;
    font-size: 78px;
    line-height: 90px;
    font-weight: bold;
    color: #c9c3c2;
    transform: scaleX(0.56) skewY(3deg);
    transform-origin: left top;
}
```
